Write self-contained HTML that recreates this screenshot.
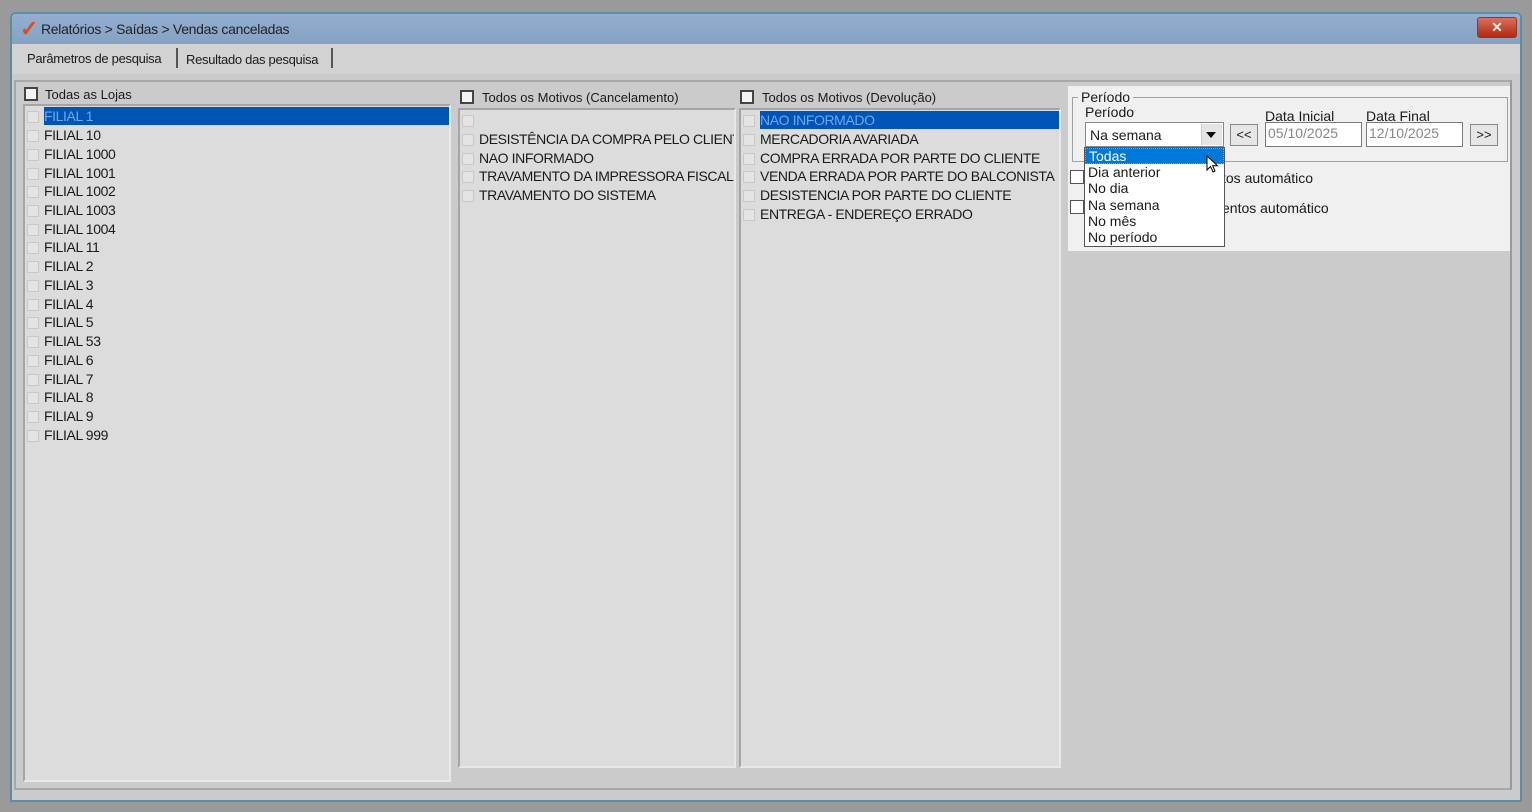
<!DOCTYPE html>
<html><head><meta charset="utf-8"><style>
*{margin:0;padding:0;box-sizing:border-box}
body{width:1532px;height:812px;background:#9a9a9a;position:relative;overflow:hidden;font-family:"Liberation Sans",sans-serif;font-size:14px;color:#1a1a1a}
.a{position:absolute}
.win{left:10px;top:12px;width:1512px;height:790px;background:#cbcbcb;border:2px solid #5d8ea0;border-radius:6px 6px 0 0}
.title{left:12px;top:14px;width:1508px;height:30px;background:linear-gradient(#93aed0,#86a2c2);border-radius:5px 5px 0 0}
.list{background:#dcdcdc;border:2px solid #a5a5a5;border-right-color:#e8e8e8;border-bottom-color:#e8e8e8;overflow:hidden}
.row{position:absolute;left:2px;right:0;height:18px;line-height:18px;font-size:14px;white-space:nowrap;overflow:hidden;letter-spacing:-0.4px}
.row i{display:inline-block;width:12px;height:12px;border:1px solid #c8c8c8;background:#e4e4e4;vertical-align:-2px;margin-right:5px}
.sel span{background:#0054b4;color:#6aa8f0;display:inline-block;width:100%}
.cb{width:14px;height:14px;border:2px solid #444;background:#f4f4f4}
.hd{font-size:13px}
.box{background:#fff;border:1px solid #7a7a7a}
.btn{background:#e6e6e6;border:1px solid #8a8a8a;text-align:center;font-size:13px;line-height:20px}
</style></head><body>
<div class="a win"></div>
<div class="a title"></div>
<div class="a" style="left:20px;top:16px;color:#e24a1a;font-size:22px;font-weight:bold">✓</div>
<div class="a" style="left:41px;top:21px;font-size:14px;color:#222;letter-spacing:-0.3px">Relatórios &gt; Saídas &gt; Vendas canceladas</div>
<div class="a" style="left:1477px;top:17px;width:40px;height:21px;background:linear-gradient(#d9705e,#b42810);border:1px solid #8a3a30;border-radius:3px;color:#eee;text-align:center;font-size:14px;line-height:19px;font-weight:bold">✕</div>
<div class="a" style="left:12px;top:44px;width:1508px;height:30px;background:#d2d2d2"></div>
<div class="a" style="left:27px;top:51px;font-size:13px;letter-spacing:-0.3px">Parâmetros de pesquisa</div>
<div class="a" style="left:176px;top:48px;width:2px;height:20px;background:#555"></div>
<div class="a" style="left:186px;top:52px;font-size:13px;letter-spacing:-0.3px">Resultado das pesquisa</div>
<div class="a" style="left:331px;top:48px;width:2px;height:20px;background:#555"></div>
<div class="a" style="left:14px;top:80px;width:1498px;height:710px;border:2px solid #a8a8a8;border-right-color:#9a9a9a;background:#cbcbcb"></div>

<div class="a cb" style="left:24px;top:87px"></div>
<div class="a hd" style="left:45px;top:87px">Todas as Lojas</div>
<div class="a list" style="left:23px;top:104px;width:428px;height:678px">
<div class="row sel" style="top:1px"><i></i><span>FILIAL 1</span></div>
<div class="row" style="top:20px"><i></i>FILIAL 10</div>
<div class="row" style="top:39px"><i></i>FILIAL 1000</div>
<div class="row" style="top:58px"><i></i>FILIAL 1001</div>
<div class="row" style="top:76px"><i></i>FILIAL 1002</div>
<div class="row" style="top:95px"><i></i>FILIAL 1003</div>
<div class="row" style="top:114px"><i></i>FILIAL 1004</div>
<div class="row" style="top:132px"><i></i>FILIAL 11</div>
<div class="row" style="top:151px"><i></i>FILIAL 2</div>
<div class="row" style="top:170px"><i></i>FILIAL 3</div>
<div class="row" style="top:189px"><i></i>FILIAL 4</div>
<div class="row" style="top:207px"><i></i>FILIAL 5</div>
<div class="row" style="top:226px"><i></i>FILIAL 53</div>
<div class="row" style="top:245px"><i></i>FILIAL 6</div>
<div class="row" style="top:264px"><i></i>FILIAL 7</div>
<div class="row" style="top:282px"><i></i>FILIAL 8</div>
<div class="row" style="top:301px"><i></i>FILIAL 9</div>
<div class="row" style="top:320px"><i></i>FILIAL 999</div>
</div>

<div class="a cb" style="left:460px;top:90px"></div>
<div class="a hd" style="left:482px;top:90px">Todos os Motivos (Cancelamento)</div>
<div class="a list" style="left:458px;top:108px;width:278px;height:660px">
<div class="row" style="top:1px"><i></i></div>
<div class="row" style="top:20px"><i></i>DESISTÊNCIA DA COMPRA PELO CLIENTE</div>
<div class="row" style="top:39px"><i></i>NAO INFORMADO</div>
<div class="row" style="top:57px"><i></i>TRAVAMENTO DA IMPRESSORA FISCAL</div>
<div class="row" style="top:76px"><i></i>TRAVAMENTO DO SISTEMA</div>
</div>

<div class="a cb" style="left:740px;top:90px"></div>
<div class="a hd" style="left:762px;top:90px">Todos os Motivos (Devolução)</div>
<div class="a list" style="left:739px;top:108px;width:322px;height:660px">
<div class="row sel" style="top:1px"><i></i><span>NAO INFORMADO</span></div>
<div class="row" style="top:20px"><i></i>MERCADORIA AVARIADA</div>
<div class="row" style="top:39px"><i></i>COMPRA ERRADA POR PARTE DO CLIENTE</div>
<div class="row" style="top:57px"><i></i>VENDA ERRADA POR PARTE DO BALCONISTA</div>
<div class="row" style="top:76px"><i></i>DESISTENCIA POR PARTE DO CLIENTE</div>
<div class="row" style="top:95px"><i></i>ENTREGA - ENDEREÇO ERRADO</div>
</div>

<div class="a" style="left:1068px;top:86px;width:442px;height:165px;background:#f0f0f0"></div>
<div class="a" style="left:1072px;top:97px;width:436px;height:65px;border:1px solid #a0a0a0"></div>
<div class="a" style="left:1078px;top:89px;background:#f0f0f0;padding:0 3px;font-size:14px">Período</div>
<div class="a" style="left:1085px;top:104px;font-size:14px">Período</div>
<div class="a" style="left:1265px;top:108px;font-size:14px">Data Inicial</div>
<div class="a" style="left:1366px;top:108px;font-size:14px">Data Final</div>
<div class="a box" style="left:1085px;top:122px;width:139px;height:25px;border-color:#888"></div>
<div class="a" style="left:1090px;top:127px;font-size:14px">Na semana</div>
<div class="a" style="left:1201px;top:124px;width:21px;height:21px;background:#e4e4e4;border-left:1px solid #ccc"></div>
<div class="a" style="left:1206px;top:132px;width:0;height:0;border:5px solid transparent;border-top:6px solid #000"></div>
<div class="a btn" style="left:1230px;top:124px;width:28px;height:22px">&lt;&lt;</div>
<div class="a box" style="left:1265px;top:122px;width:97px;height:25px;color:#888;font-size:14px;padding:2px 2px">05/10/2025</div>
<div class="a box" style="left:1366px;top:122px;width:97px;height:25px;color:#888;font-size:14px;padding:2px 2px">12/10/2025</div>
<div class="a btn" style="left:1470px;top:124px;width:28px;height:22px">&gt;&gt;</div>
<div class="a cb" style="left:1070px;top:170px;border-width:1px;border-color:#555;background:#fff"></div>
<div class="a" style="left:1222px;top:170px;font-size:14px">tos automático</div>
<div class="a cb" style="left:1070px;top:200px;border-width:1px;border-color:#555;background:#fff"></div>
<div class="a" style="left:1222px;top:200px;font-size:14px">entos automático</div>
<div class="a" style="left:1084px;top:147px;width:141px;height:100px;background:#fff;border:1px solid #555;font-size:14px;line-height:16.2px">
<div style="background:#0078d7;color:#fff;padding-left:3px;border:1px dotted #e08a30;line-height:14.2px">Todas</div>
<div style="padding-left:3px">Dia anterior</div>
<div style="padding-left:3px">No dia</div>
<div style="padding-left:3px">Na semana</div>
<div style="padding-left:3px">No mês</div>
<div style="padding-left:3px">No período</div>
</div>
<svg class="a" style="left:1206px;top:155px" width="14" height="20" viewBox="0 0 14 20"><path d="M1 1 L1 15 L4.5 11.5 L7 17 L9 16 L6.7 10.7 L11.5 10.7 Z" fill="#fff" stroke="#000" stroke-width="1"/></svg>
</body></html>
